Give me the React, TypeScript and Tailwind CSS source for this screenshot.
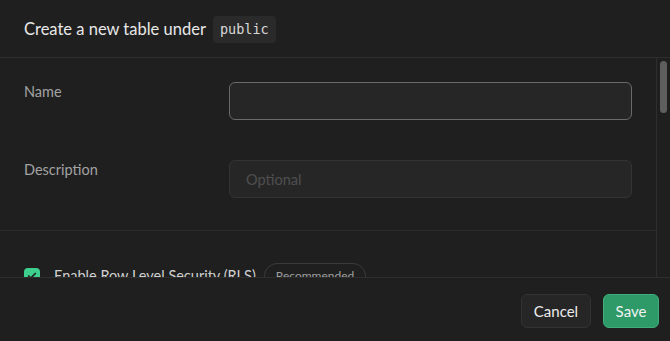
import React, { useState } from "react";

function Field({ label, placeholder }: { label: string; placeholder?: string }) {
  return (
    <div className="flex items-start">
      <label className="w-[205px] shrink-0 text-[14.5px] leading-5 text-[#a3a3a3]">{label}</label>
      <input
        type="text"
        placeholder={placeholder}
        className="h-[38px] flex-1 rounded-md border border-[#333333] bg-[#262626] px-4 text-[14.5px] text-[#ededed] outline-none placeholder:text-[#4f4f4f]"
      />
    </div>
  );
}

export default function App() {
  const [rls, setRls] = useState(true);
  const [name, setName] = useState("");

  return (
    <div className="flex h-[341px] w-[670px] flex-col bg-[#1f1f1f] font-['Lato',sans-serif] text-[#ededed]">
      <div className="flex h-[58px] shrink-0 items-center gap-[7px] border-b border-[#2e2e2e] px-6 pt-[2px]">
        <h1 className="text-[16.5px] text-[#e8e8e8]">Create a new table under</h1>
        <code className="rounded bg-[#2a2a2a] px-[7px] py-[3px] font-['DejaVu_Sans_Mono',monospace] text-[13.5px] text-[#d8d8d8]">
          public
        </code>
      </div>

      <div className="flex min-h-0 flex-1">
        <div className="flex-1 overflow-hidden">
          <div className="flex flex-col gap-10 border-b border-[#2a2a2a] px-6 pb-8 pt-6">
            <div className="flex items-start">
              <label className="w-[205px] shrink-0 text-[14.5px] leading-5 text-[#a3a3a3]">Name</label>
              <input
                type="text"
                value={name}
                onChange={(e) => setName(e.target.value)}
                className="h-[38px] flex-1 rounded-md border border-[#6a6a6a] bg-[#262626] px-4 text-[14.5px] text-[#ededed] outline-none"
              />
            </div>
            <Field label="Description" placeholder="Optional" />
          </div>
          <div className="flex items-center gap-[14px] px-6 pt-[32px]">
            <button
              onClick={() => setRls(!rls)}
              className={
                "flex h-4 w-4 shrink-0 items-center justify-center rounded " +
                (rls ? "bg-[#3ecf8e]" : "border border-[#555] bg-transparent")
              }
            >
              {rls && (
                <svg width="10" height="10" viewBox="0 0 24 24" fill="none" stroke="#1f1f1f" strokeWidth="4" strokeLinecap="round" strokeLinejoin="round">
                  <path d="M20 6 9 17l-5-5" />
                </svg>
              )}
            </button>
            <span className="text-[14.5px] text-[#d0d0d0]">Enable Row Level Security (RLS)</span>
            <span className="-ml-[6px] rounded-full border border-[#3a3a3a] px-[11px] py-[3px] text-[12px] text-[#a0a0a0]">
              Recommended
            </span>
          </div>
        </div>
        <div className="flex w-[14px] shrink-0 justify-center border-l border-[#2e2e2e] pt-[3px]">
          <div className="h-[52px] w-[7px] rounded-full bg-[#5e5e5e]" />
        </div>
      </div>

      <div className="flex h-[64px] shrink-0 items-start justify-end gap-3 border-t border-[#2e2e2e] px-[11px] pt-4">
        <button className="h-[34px] w-[70px] rounded-md border border-[#333333] bg-[#262626] text-[15px] text-[#ededed]">
          Cancel
        </button>
        <button className="h-[34px] w-[56px] rounded-md border border-[#3fae7c] bg-[#2d9a68] text-[15px] text-[#f2f2f2]">
          Save
        </button>
      </div>
    </div>
  );
}
